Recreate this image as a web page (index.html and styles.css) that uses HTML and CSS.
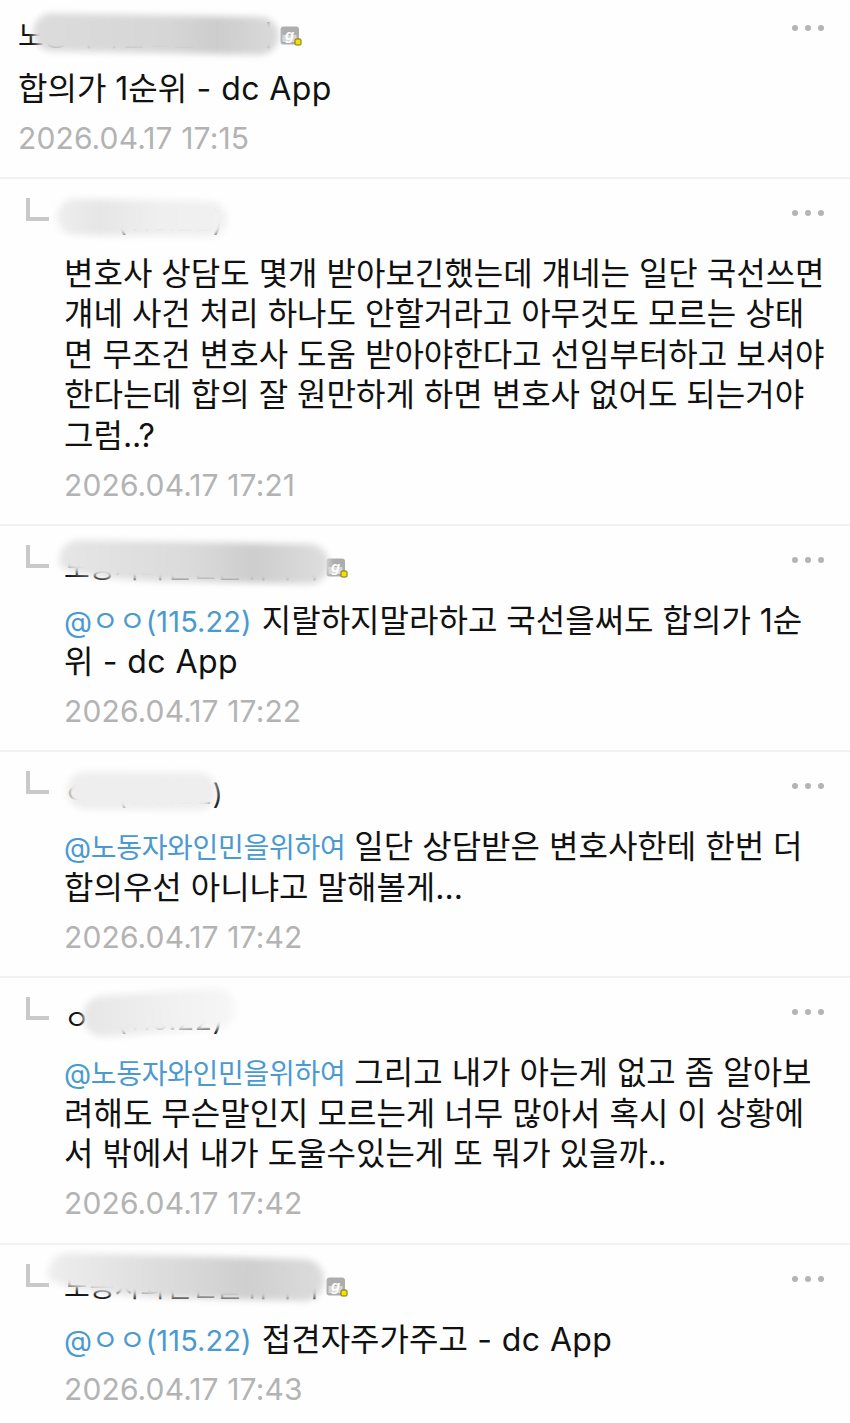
FILE: index.html
```html
<!DOCTYPE html>
<html lang="ko">
<head>
<meta charset="utf-8">
<title>댓글</title>
<link rel="stylesheet" href="styles.css">
</head>
<body>
<main class="list">
  <article class="comment first">
    <header class="head">
      <span class="nick">노동자와인민을위하여 <svg class="badge" viewBox="0 0 22 20"><rect x="0.5" y="0.5" width="18.5" height="18" rx="3" fill="#adadad"/><rect x="2.5" y="9" width="14" height="7" fill="#d6d6d6"/><text x="5" y="14" class="badge-g">g</text><rect x="15" y="13" width="6" height="6" rx="1" fill="#f5e000" stroke="#7d7214"/></svg></span>
      <span class="more"><i></i><i></i><i></i></span>
    </header>
    <p class="text">합의가 1순위<span class="tag"> - dc App</span></p>
    <time class="date">2026.04.17 17:15</time>
    <div class="smear smear-1"></div>
  </article>

  <article class="comment reply">
    <span class="arrow"></span>
    <header class="head"><span class="nick nick-ip">ㅇㅇ(115.22)</span><span class="more"><i></i><i></i><i></i></span></header>
    <p class="text">변호사 상담도 몇개 받아보긴했는데 걔네는 일단 국선쓰면<br>걔네 사건 처리 하나도 안할거라고 아무것도 모르는 상태<br>면 무조건 변호사 도움 받아야한다고 선임부터하고 보셔야<br>한다는데 합의 잘 원만하게 하면 변호사 없어도 되는거야<br>그럼..?</p>
    <time class="date">2026.04.17 17:21</time>
    <div class="smear smear-2"></div>
  </article>

  <article class="comment reply">
    <span class="arrow"></span>
    <header class="head"><span class="nick">노동자와인민을위하여 <svg class="badge" viewBox="0 0 22 20"><rect x="0.5" y="0.5" width="18.5" height="18" rx="3" fill="#adadad"/><rect x="2.5" y="9" width="14" height="7" fill="#d6d6d6"/><text x="5" y="14" class="badge-g">g</text><rect x="15" y="13" width="6" height="6" rx="1" fill="#f5e000" stroke="#7d7214"/></svg></span><span class="more"><i></i><i></i><i></i></span></header>
    <p class="text"><span class="mention mention-ip">@ㅇㅇ(115.22)</span> 지랄하지말라하고 국선을써도 합의가 1순<br>위<span class="tag"> - dc App</span></p>
    <time class="date">2026.04.17 17:22</time>
    <div class="smear smear-3"></div>
  </article>

  <article class="comment reply">
    <span class="arrow"></span>
    <header class="head"><span class="nick nick-ip">ㅇㅇ(115.22)</span><span class="more"><i></i><i></i><i></i></span></header>
    <p class="text"><span class="mention">@노동자와인민을위하여</span> 일단 상담받은 변호사한테 한번 더<br>합의우선 아니냐고 말해볼게...</p>
    <time class="date">2026.04.17 17:42</time>
    <div class="smear smear-4"></div>
  </article>

  <article class="comment reply">
    <span class="arrow"></span>
    <header class="head"><span class="nick nick-ip">ㅇㅇ(115.22)</span><span class="more"><i></i><i></i><i></i></span></header>
    <p class="text"><span class="mention">@노동자와인민을위하여</span> 그리고 내가 아는게 없고 좀 알아보<br>려해도 무슨말인지 모르는게 너무 많아서 혹시 이 상황에<br>서 밖에서 내가 도울수있는게 또 뭐가 있을까..</p>
    <time class="date">2026.04.17 17:42</time>
    <div class="smear smear-5"></div>
  </article>

  <article class="comment reply">
    <span class="arrow"></span>
    <header class="head"><span class="nick">노동자와인민을위하여 <svg class="badge" viewBox="0 0 22 20"><rect x="0.5" y="0.5" width="18.5" height="18" rx="3" fill="#adadad"/><rect x="2.5" y="9" width="14" height="7" fill="#d6d6d6"/><text x="5" y="14" class="badge-g">g</text><rect x="15" y="13" width="6" height="6" rx="1" fill="#f5e000" stroke="#7d7214"/></svg></span><span class="more"><i></i><i></i><i></i></span></header>
    <p class="text"><span class="mention mention-ip">@ㅇㅇ(115.22)</span> 접견자주가주고<span class="tag"> - dc App</span></p>
    <time class="date">2026.04.17 17:43</time>
    <div class="smear smear-6"></div>
  </article>
</main>
</body>
</html>
```
FILE: styles.css
```css
html, body {
  margin: 0;
  padding: 0;
  background: #fefefe;
}
body {
  font-family: "Inter", "Noto Sans CJK KR", sans-serif;
  color: #111111;
  height: 1423px;
  overflow: hidden;
}
.list {
  display: flex;
  flex-direction: column;
}
.comment {
  position: relative;
  padding: 20px 26px 19.2px 64px;
  border-bottom: 2px solid #f1f1f1;
}
.comment.first {
  padding: 14px 26px 18.6px 18px;
}
.head {
  display: flex;
  justify-content: space-between;
  align-items: flex-start;
  height: 55px;
}
.nick {
  font-size: 28px;
  line-height: 40px;
  letter-spacing: -0.3px;
  margin-top: 2px;
  white-space: nowrap;
  display: flex;
  align-items: center;
  gap: 7px;
}
.nick-ip {
  letter-spacing: 0.6px;
}
.badge {
  width: 22px;
  height: 20px;
  flex: none;
}
.badge-g {
  font: italic 700 15px "Liberation Sans", sans-serif;
  fill: #fff;
}
.more {
  display: flex;
  gap: 7px;
  padding-top: 11px;
}
.more i {
  display: block;
  width: 6px;
  height: 6px;
  border-radius: 50%;
  background: #b4b4b4;
}
.text {
  margin: 0;
  font-size: 32px;
  line-height: 40.4px;
  white-space: nowrap;
}
.tag {
  letter-spacing: 0.4px;
}
.mention {
  color: #4a9ad0;
  font-size: 28px;
  letter-spacing: -0.3px;
  line-height: 1;
}
.mention-ip {
  font-size: 29px;
  letter-spacing: 0.1px;
  margin-right: 1px;
}
.date {
  display: block;
  margin-top: 9px;
  font-size: 30px;
  line-height: 40px;
  letter-spacing: 0.12px;
  color: #b3b3b3;
}
.arrow {
  position: absolute;
  left: 26px;
  top: 19px;
  width: 19px;
  height: 19px;
  border-left: 4px solid #c9c9c9;
  border-bottom: 4px solid #c9c9c9;
}
.smear {
  position: absolute;
  border-radius: 20px;
  filter: blur(3px);
}
.smear-1 {
  left: 33px;
  top: 15px;
  width: 246px;
  height: 38px;
  background: linear-gradient(90deg, #dcdcdc, #d6d6d6 55%, #cdcdcd 75%, #dadada);
  transform: rotate(1deg);
}
.smear-2 {
  left: 57px;
  top: 21px;
  width: 170px;
  height: 36px;
  background: linear-gradient(90deg, #eeeeee, #e6e6e6 25%, #efefef 60%, #f1f1f1);
  transform: rotate(1deg);
}
.smear-3 {
  left: 59px;
  top: 16px;
  width: 270px;
  height: 40px;
  background: linear-gradient(90deg, #e6e6e6, #dadada 50%, #cdcdcd 72%, #dedede);
  border-radius: 20px 20px 20px 110px / 20px 20px 20px 16px;
  transform: rotate(1deg);
}
.smear-4 {
  left: 67px;
  top: 20px;
  width: 150px;
  height: 38px;
  background: #eeeeee;
  transform: rotate(0.5deg);
}
.smear-5 {
  left: 83px;
  top: 14px;
  width: 152px;
  height: 41px;
  background: linear-gradient(90deg, #e6e6e6, #f1f1f1 60%, #f6f6f6);
  transform: rotate(-4deg);
}
.smear-6 {
  left: 48px;
  top: 11px;
  width: 276px;
  height: 42px;
  background: linear-gradient(90deg, #eeeeee, #dddddd 40%, #cfcfcf 72%, #dcdcdc);
  border-radius: 20px 20px 20px 130px / 20px 20px 20px 18px;
  transform: rotate(1.5deg);
}
```
